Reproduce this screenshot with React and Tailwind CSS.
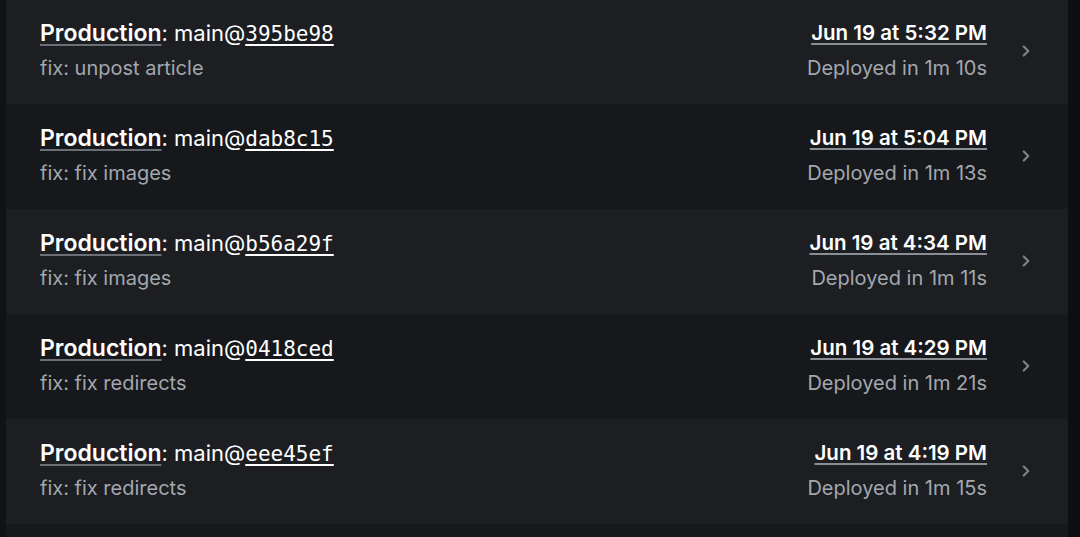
import { ChevronRight } from "lucide-react"

const deployments = [
  { hash: "395be98", message: "fix: unpost article", date: "Jun 19 at 5:32 PM", duration: "1m 10s" },
  { hash: "dab8c15", message: "fix: fix images", date: "Jun 19 at 5:04 PM", duration: "1m 13s" },
  { hash: "b56a29f", message: "fix: fix images", date: "Jun 19 at 4:34 PM", duration: "1m 11s" },
  { hash: "0418ced", message: "fix: fix redirects", date: "Jun 19 at 4:29 PM", duration: "1m 21s" },
  { hash: "eee45ef", message: "fix: fix redirects", date: "Jun 19 at 4:19 PM", duration: "1m 15s" },
]

function DeploymentRow({ deployment, index }) {
  const light = index % 2 === 0
  return (
    <div
      className={`flex items-start h-[105px] pl-[34px] pr-[33px] ${light ? "bg-[#1c1e22]" : "bg-[#16181b]"}`}
    >
      <div className="flex-1 pt-[19px]">
        <div className="text-[22px] leading-[30px] text-white">
          <span className="text-[23px] font-semibold underline decoration-[#6b6f76] decoration-2 underline-offset-[3px]">
            Production
          </span>
          : main@
          <span className="font-['DejaVu_Sans_Mono',monospace] text-[21px] underline decoration-2 underline-offset-[3px]">
            {deployment.hash}
          </span>
        </div>
        <div className="mt-[6px] text-[20px] leading-[26px] text-[#a3a7ae]">{deployment.message}</div>
      </div>
      <div className="flex flex-col items-end pt-[20px]">
        <div className="text-[20.5px] leading-[28px] font-semibold text-white underline decoration-[#8a8e95] underline-offset-[3px]">
          {deployment.date}
        </div>
        <div className="mt-[8px] text-[20px] leading-[26px] text-[#a3a7ae]">Deployed in {deployment.duration}</div>
      </div>
      <div className="pl-[30px] pt-[43px]">
        <ChevronRight className="h-[18px] w-[18px] text-[#7c8087]" strokeWidth={3} />
      </div>
    </div>
  )
}

export default function App() {
  return (
    <div className="h-[537px] w-[1080px] overflow-hidden bg-[#111316] font-['Inter',sans-serif]">
      <div className="flex h-full">
        <div className="w-[6px] bg-[#101215]" />
        <div className="flex-1 -mt-[1px] bg-[#16181b]">
          {deployments.map((d, i) => (
            <DeploymentRow key={d.hash} deployment={d} index={i} />
          ))}
        </div>
        <div className="w-[12px] bg-[#0c0e11]" />
      </div>
    </div>
  )
}
